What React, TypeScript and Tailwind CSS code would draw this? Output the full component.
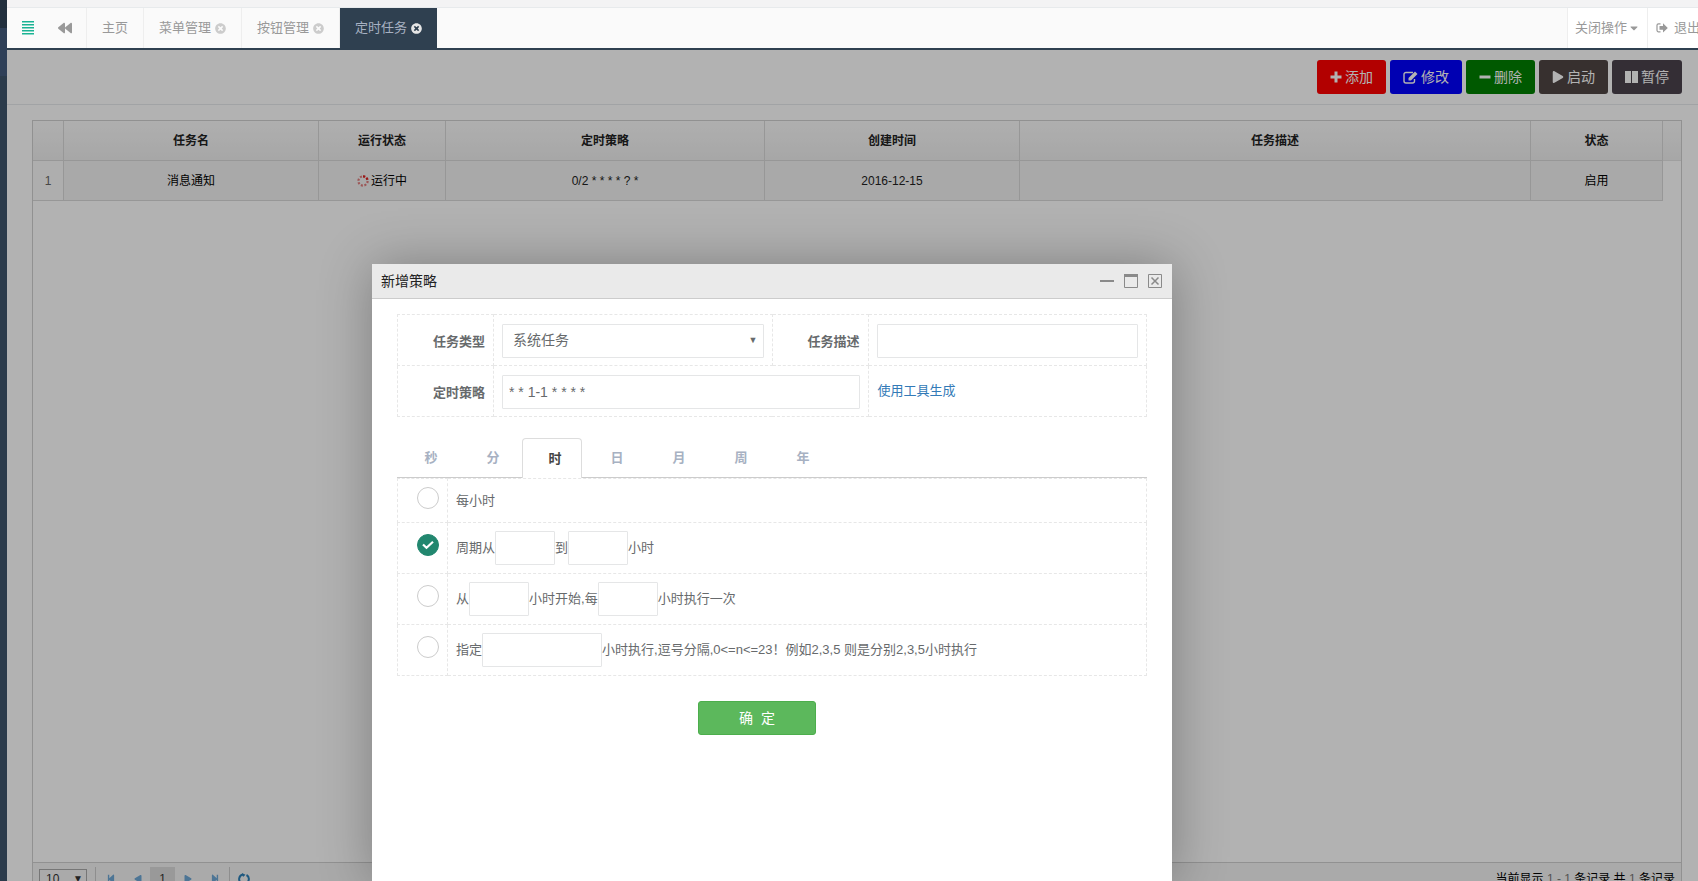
import { useState } from 'react';
import type { ReactNode } from 'react';
import { FaBackward, FaPlay, FaTimesCircle, FaCaretDown, FaStepBackward, FaStepForward } from 'react-icons/fa';

const units = ['秒', '分', '时', '日', '月', '周', '年'];

const pages = [
  { label: '主页', closable: false },
  { label: '菜单管理', closable: true },
  { label: '按钮管理', closable: true },
  { label: '定时任务', closable: true },
];

function PlusIcon() {
  return (
    <svg viewBox="0 0 12 12" className="size-3" fill="currentColor">
      <path d="M4.500.5h3v4h4v3h-4v4h-3v-4h-4v-3h4z" />
    </svg>
  );
}

function EditIcon() {
  return (
    <svg viewBox="0 0 15 13" className="h-[13px] w-[15px]" fill="none" stroke="currentColor">
      <path d="M10 1.500H3A2 2 0 0 0 1 3.500v6.500a2 2 0 0 0 2 2h6.500a2 2 0 0 0 2-2V8" strokeWidth="1.400" />
      <path d="M5.500 9.500V7l6.500-6.500L14.500 3 8 9.500z" fill="currentColor" stroke="none" />
    </svg>
  );
}

function MinusIcon() {
  return (
    <svg viewBox="0 0 12 12" className="size-3" fill="currentColor">
      <path d="M.5 4.500h11v3H.5z" />
    </svg>
  );
}

function PauseIcon() {
  return (
    <svg viewBox="0 0 13 12" className="h-3 w-[13px]" fill="currentColor">
      <path d="M0 0h6v12H0zM7 0h6v12H7z" />
    </svg>
  );
}

const actions = [
  { label: '添加', icon: <PlusIcon />, color: 'bg-[#ff0000]' },
  { label: '修改', icon: <EditIcon />, color: 'bg-[#0000ff]' },
  { label: '删除', icon: <MinusIcon />, color: 'bg-[#008000]' },
  { label: '启动', icon: <FaPlay className="size-3" />, color: 'bg-[#504644]' },
  { label: '暂停', icon: <PauseIcon />, color: 'bg-[#4b434d]' },
];

const field =
  'h-[34px] rounded-[1px] border border-[#e5e6e7] bg-white px-1.5 text-[14px] text-[#676a6c] outline-none';

function SignOutIcon() {
  return (
    <svg viewBox="0 0 12 12" className="size-3 shrink-0" fill="none">
      <path d="M4.500 1.800H2.500A1.500 1.500 0 0 0 1 3.300v5a1.500 1.500 0 0 0 1.500 1.500h2" stroke="currentColor" strokeWidth="1.200" />
      <path d="M3.500 4h3.500V1.200L11.800 6 7 10.600V7.800H3.500z" fill="currentColor" />
    </svg>
  );
}

function MenuIcon() {
  return (
    <svg viewBox="0 0 12 14" className="h-3.5 w-3" fill="#1ab394">
      <path d="M0 0h12v1.500H0zM0 3h12v1.500H0zM0 6h12v1.500H0zM0 9h12v1.500H0zM0 12h12v1.500H0z" />
    </svg>
  );
}

function Spinner() {
  return (
    <svg viewBox="0 0 12 12" className="size-3" fill="none" strokeWidth="2.200" strokeDasharray="2 1.600">
      <circle cx="6" cy="6" r="4.600" stroke="#e07c7c" />
      <path d="M6 1.400A4.600 4.600 0 0 1 10.600 6" stroke="#e02020" />
    </svg>
  );
}

function TopTabs() {
  return (
    <nav className="flex h-[42px] shrink-0 border-b-2 border-[#2f4050] bg-[#fafafa] text-[13px] text-[#999]">
      <button aria-label="菜单" className="flex w-[42px] items-center justify-center">
        <MenuIcon />
      </button>
      <button aria-label="向左" className="flex w-[38px] items-center border-r border-[#eee] pl-[9px]">
        <FaBackward className="size-3.5" />
      </button>
      {pages.map((p, i) => (
        <a
          key={p.label}
          href="#"
          className={
            i === pages.length - 1
              ? 'flex items-center gap-1 bg-[#2f4050] px-[15px] text-[#a7b1c2]'
              : 'flex items-center gap-1 border-r border-[#eee] px-[15px]'
          }
        >
          {p.label}
          {p.closable && (
            <FaTimesCircle className={i === pages.length - 1 ? 'size-[11px] text-[#e6e6e6]' : 'size-[11px] text-[#ccc]'} />
          )}
        </a>
      ))}
      <div className="flex-1" />
      <button className="flex w-20 items-center justify-center gap-px border-l border-[#eee] bg-white">
        关闭操作
        <FaCaretDown className="size-3" />
      </button>
      <a href="#" className="flex w-[51px] items-center gap-1.5 overflow-hidden border-l border-[#eee] bg-white pl-2 whitespace-nowrap">
        <SignOutIcon />
        退出
      </a>
    </nav>
  );
}

function TaskGrid() {
  const th = 'border-r border-b border-[#d8d8d8] font-bold';
  const td = 'border-r border-b border-[#d8d8d8]';
  return (
    <div className="mx-4 mt-[15px] ml-[25px] flex flex-1 flex-col border-x border-t border-[#d0d0d0] text-[12px] text-[#222]">
      <table className="w-full table-fixed border-separate border-spacing-0 text-center">
        <colgroup>
          <col className="w-[31px]" />
          <col className="w-[255px]" />
          <col className="w-[127px]" />
          <col className="w-[319px]" />
          <col className="w-[255px]" />
          <col />
          <col className="w-[132px]" />
          <col className="w-[18px]" />
        </colgroup>
        <thead>
          <tr className="h-10 bg-linear-to-b from-[#fbfbfb] to-[#efefef]">
            <th className={th} />
            <th className={th}>任务名</th>
            <th className={th}>运行状态</th>
            <th className={th}>定时策略</th>
            <th className={th}>创建时间</th>
            <th className={th}>任务描述</th>
            <th className={th}>状态</th>
            <th className="border-b border-[#e4e4e4]" />
          </tr>
        </thead>
        <tbody>
          <tr className="h-10 bg-[#f2f2f2]">
            <td className={`${td} bg-[#fafafa] text-[#666]`}>1</td>
            <td className={`${td} text-black`}>消息通知</td>
            <td className={`${td} text-black`}>
              <span className="flex items-center justify-center gap-0.5">
                <Spinner />
                运行中
              </span>
            </td>
            <td className={td}>0/2 * * * * ? *</td>
            <td className={td}>2016-12-15</td>
            <td className={td} />
            <td className={`${td} text-black`}>启用</td>
            <td className="bg-white" />
          </tr>
        </tbody>
      </table>
      <div className="flex-1" />
      <div className="-mb-[13px] flex h-8 shrink-0 items-center border-t border-[#d0d0d0] bg-[#f4f4f4] pl-1.5 pr-1.5 text-[#333]">
        <div className="relative">
          <select aria-label="每页条数" className="h-5 w-12 appearance-none border border-[#aaa] px-1.5 leading-none">
            <option>10</option>
          </select>
          <span className="pointer-events-none absolute top-0.5 right-1 text-[10px]">▼</span>
        </div>
        <div className="ml-2 flex h-6 items-center border-x border-[#ccc] text-[#6fa8d6]">
          <button aria-label="首页" className="flex w-[30px] justify-center"><FaStepBackward className="size-2.5" /></button>
          <button aria-label="上一页" className="flex w-6 justify-center"><FaPlay className="size-2 rotate-180" /></button>
          <button className="h-6 w-[25px] bg-[#dcdcdc] text-[#333]">1</button>
          <button aria-label="下一页" className="flex w-[26px] justify-center"><FaPlay className="size-2" /></button>
          <button aria-label="末页" className="flex w-7 justify-center"><FaStepForward className="size-2.5" /></button>
        </div>
        <button aria-label="刷新" className="ml-2 text-[#2d80b8]">
          <svg viewBox="0 0 12 12" className="size-3" fill="none" stroke="currentColor" strokeWidth="2">
            <path d="M3.500 10A4.500 4.500 0 0 1 5 1.600M8.500 2A4.500 4.500 0 0 1 7 10.400" />
            <path d="M4 0l3.500 1.800L5 4zM8 12l-3.500-1.800L7 8z" fill="currentColor" stroke="none" />
          </svg>
        </button>
        <span className="ml-auto text-black">
          当前显示 <span className="text-[#777]">1 - 1</span> 条记录 共 <span className="text-[#777]">1</span> 条记录
        </span>
      </div>
    </div>
  );
}

function NumberField({ label, wide }: { label: string; wide?: boolean }) {
  return <input aria-label={label} className={`${field} ${wide ? 'w-[120px]' : 'w-[60px]'}`} />;
}

const rules: { id: string; content: ReactNode }[] = [
  { id: 'every', content: '每小时' },
  {
    id: 'range',
    content: (
      <>
        周期从<NumberField label="周期开始" />到<NumberField label="周期结束" />小时
      </>
    ),
  },
  {
    id: 'step',
    content: (
      <>
        从<NumberField label="开始小时" />小时开始,每<NumberField label="间隔小时" />小时执行一次
      </>
    ),
  },
  {
    id: 'list',
    content: (
      <>
        指定<NumberField label="指定小时" wide />
        <span>{'小时执行,逗号分隔,0<=n<=23！例如2,3,5 则是分别2,3,5小时执行'}</span>
      </>
    ),
  },
];

function StrategyDialog() {
  const [unit, setUnit] = useState('时');
  const [rule, setRule] = useState('range');
  const cell = 'border border-dashed border-[#e7e7e7]';

  return (
    <section
      role="dialog"
      aria-labelledby="dialog-title"
      className="absolute top-[214px] bottom-0 left-[365px] w-[800px] bg-white text-[13px] text-[#676a6c] shadow-[1px_1px_50px_rgba(0,0,0,0.3)]"
    >
      <header className="flex h-[35px] items-center border-b border-[#ccc] bg-[#eaeaea] pr-2.5 pl-[9px]">
        <h2 id="dialog-title" className="flex-1 text-[14px] text-[#222]">新增策略</h2>
        <div className="flex gap-2.5 text-[#8a8a8a]">
          <button aria-label="最小化">
            <svg viewBox="0 0 14 14" className="size-3.5"><path d="M0 6h14v2H0z" fill="currentColor" /></svg>
          </button>
          <button aria-label="最大化">
            <svg viewBox="0 0 14 14" className="size-3.5" fill="none" stroke="currentColor">
              <path d="M.5.5h13v13H.5z" />
              <path d="M0 1.500h14" strokeWidth="3" />
            </svg>
          </button>
          <button aria-label="关闭">
            <svg viewBox="0 0 14 14" className="size-3.5" fill="none" stroke="currentColor">
              <path d="M.5.5h13v13H.5z" />
              <path d="M3.500 3.500l7 7M10.500 3.500l-7 7" strokeWidth="1.500" />
            </svg>
          </button>
        </div>
      </header>

      <div className="px-[25px] pt-[15px]">
        <table className="w-full table-fixed border-collapse">
          <colgroup>
            <col className="w-24" />
            <col />
            <col className="w-24" />
            <col />
          </colgroup>
          <tbody>
            <tr className="h-[51px]">
              <th className={`${cell} pt-1 pr-2 text-right`}><label htmlFor="type">任务类型</label></th>
              <td className={`${cell} px-2 pt-px`}>
                <div className="relative">
                  <select id="type" className={`${field} block w-full appearance-none pl-2.5`}>
                    <option>系统任务</option>
                  </select>
                  <span className="pointer-events-none absolute top-2.5 right-1.5 text-[9px]">▼</span>
                </div>
              </td>
              <th className={`${cell} pt-1 pr-2 text-right`}><label htmlFor="desc">任务描述</label></th>
              <td className={`${cell} px-2 pt-px`}><input id="desc" className={`${field} block w-full`} /></td>
            </tr>
            <tr className="h-[51px]">
              <th className={`${cell} pt-1 pr-2 text-right`}><label htmlFor="cron">定时策略</label></th>
              <td colSpan={2} className={`${cell} px-2 pt-px`}>
                <input id="cron" defaultValue="* * 1-1 * * * *" className={`${field} block w-full`} />
              </td>
              <td className={`${cell} px-[9px]`}><a href="#" className="text-[#337ab7]">使用工具生成</a></td>
            </tr>
          </tbody>
        </table>

        <div role="tablist" className="mt-[21px] flex h-10 gap-0.5 border-b border-[#ccc] pl-px">
          {units.map((u) => (
            <button
              key={u}
              role="tab"
              aria-selected={u === unit}
              onClick={() => setUnit(u)}
              className={
                u === unit
                  ? '-mb-px w-[60px] rounded-t border border-b-0 border-[#ddd] bg-white pl-1.5 font-bold text-[#444]'
                  : 'w-[60px] pl-1.5 font-bold text-[#a7b1c2]'
              }
            >
              {u}
            </button>
          ))}
        </div>

        <table className="w-full table-fixed border-collapse">
          <colgroup>
            <col className="w-[50px]" />
            <col />
          </colgroup>
          <tbody>
            {rules.map((r) => (
              <tr key={r.id} className="h-[51px] first:h-11">
                <td className={`${cell} pb-1.5 pl-[19px]`}>
                  <span className="relative flex size-[22px]">
                    <input
                      type="radio"
                      name="rule"
                      aria-label={r.id}
                      checked={rule === r.id}
                      onChange={() => setRule(r.id)}
                      className="size-[22px] appearance-none rounded-full border border-[#ccc] checked:border-[#22876f] checked:bg-[#22876f]"
                    />
                    {rule === r.id && (
                      <svg viewBox="0 0 12 12" className="pointer-events-none absolute top-[5px] left-[5px] size-3" fill="none" stroke="white" strokeWidth="2.200">
                        <path d="M1 5.500l3.500 3.300L11 2.800" />
                      </svg>
                    )}
                  </span>
                </td>
                <td className={`${cell} px-2`}>
                  <div className="flex items-center whitespace-nowrap">{r.content}</div>
                </td>
              </tr>
            ))}
          </tbody>
        </table>

        <div className="mt-[25px] mr-[30px] flex justify-center">
          <button className="h-[34px] w-[118px] rounded-[3px] border border-[#4cae4c] bg-[#5cb85c] text-[14px] text-white">
            确&nbsp;&nbsp;定
          </button>
        </div>
      </div>
    </section>
  );
}

export default function App() {
  return (
    <div className="flex h-screen overflow-hidden font-['Liberation_Sans','Noto_Sans_CJK_SC',sans-serif]">
      <aside className="w-[7px] shrink-0 bg-[#2b3b4b]">
        <div className="h-7 bg-[#22303e]" />
        <div className="h-12 bg-[#2f4058]" />
      </aside>
      <div className="flex min-w-0 flex-1 flex-col">
        <div className="h-2 shrink-0 border-b border-[#e7eaec] bg-[#f3f3f4]" />
        <TopTabs />
        <main className="relative flex min-h-0 flex-1 flex-col bg-white">
          <div className="flex h-[55px] shrink-0 items-start justify-end gap-1 border-b border-[#e7eaec] pt-2.5 pr-4">
            {actions.map((a) => (
              <button
                key={a.label}
                className={`flex h-[34px] items-center justify-center gap-[3px] rounded-[3px] px-[13px] text-[14px] text-white ${a.color}`}
              >
                {a.icon}
                {a.label}
              </button>
            ))}
          </div>
          <TaskGrid />
          <div className="absolute inset-0 bg-black/30" />
          <StrategyDialog />
        </main>
      </div>
    </div>
  );
}
